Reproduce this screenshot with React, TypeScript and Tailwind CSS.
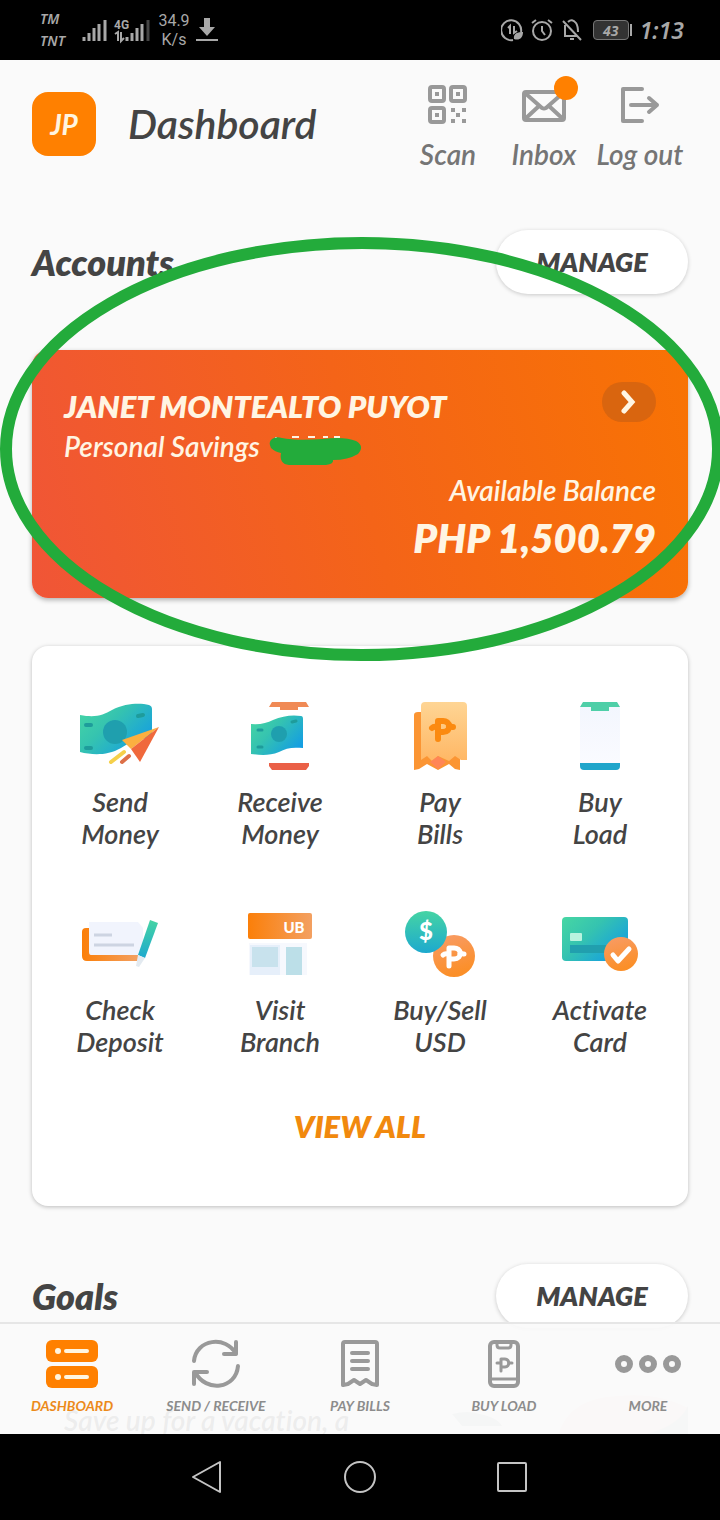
import type { ReactNode } from 'react';

const PesoMark = ({ x, y, width = 5 }: { x: number; y: number; width?: number }) => (
  <g transform={`translate(${x} ${y})`} fill="none" strokeWidth={width} strokeLinecap="round" strokeLinejoin="round">
    <path d="M-4 11V-7H0C9-8 10 4 1 4H-3" />
    <path d="M-10 0C-8-2-6-1-5-1M7-1C9-2 10-1 11-1" />
  </g>
);

const SendMoneyIcon = () => (
  <svg viewBox="0 0 100 100" className="size-[100px]" aria-hidden="true">
    <path d="M10 29C26 32 33 29 42 24C56 17 70 17 79 19Q82 20 82 23V53C68 51 60 57 51 62C37 70 22 69 10 66Z" fill="url(#bill)" />
    <circle cx="45" cy="46" r="12" fill="#1f9fae" />
    <path d="M16 39H21M16 62H21M68 30L73 29" stroke="#1e9c9b" strokeWidth="4" strokeLinecap="round" />
    <path d="M54 66L41 76" stroke="#f5d04a" strokeWidth="4" strokeLinecap="round" />
    <path d="M59 70L52 76" stroke="#dd7048" strokeWidth="4" strokeLinecap="round" />
    <path d="M89 41L52 54L61 63Z" fill="#fbb040" />
    <path d="M89 41L61 63L70 76Z" fill="#f0693c" />
  </svg>
);

const ReceiveMoneyIcon = () => (
  <svg viewBox="0 0 100 100" className="size-[100px]" aria-hidden="true">
    <path d="M42 16H76L79 21H68V24H50V21H39Z" fill="#f08a55" />
    <path d="M39 77H79V80L76 84H42L39 80Z" fill="#ea6047" />
    <path d="M21 38Q34 39 43 34Q57 28 71 30Q73 30 73 33V62C62 61 56 62 49 66C39 70 30 69 21 68Z" fill="url(#bill)" />
    <circle cx="49" cy="48" r="8" fill="#1f9fae" />
    <path d="M28 44H32M28 61H32M62 36L66 35" stroke="#1e9c9b" strokeWidth="3" strokeLinecap="round" />
  </svg>
);

const PayBillsIcon = () => (
  <svg viewBox="0 0 100 100" className="size-[100px]" aria-hidden="true">
    <path d="M24 29Q24 26 28 26H70V84L65 83L59 78L48 84L37 78L29 83L24 84Z" fill="#fb9533" />
    <path d="M31 20Q31 16 35 16H73Q77 16 77 20V74H71L65 70L59 75L48 70L42 75L37 70L31 74Z" fill="url(#receipt)" />
    <path d="M48 70L56 76L48 83L40 76Z" fill="#ff8656" />
    <g stroke="#fb8a10"><PesoMark x={52} y={42} width={6} /></g>
  </svg>
);

const BuyLoadIcon = () => (
  <svg viewBox="0 0 100 100" className="size-[100px]" aria-hidden="true">
    <rect x="30" y="20" width="40" height="58" fill="url(#screen)" />
    <path d="M33 16H67L70 21H59V25H41V21H30Z" fill="#4fcfa8" />
    <path d="M30 77H70V80Q70 84 66 84H34Q30 84 30 80Z" fill="#1fa5cb" />
  </svg>
);

const CheckDepositIcon = () => (
  <svg viewBox="0 0 100 100" className="size-[100px]" aria-hidden="true">
    <path d="M12 38Q12 34 16 34H22V60H68V67H17Q12 67 12 62Z" fill="url(#orange)" />
    <path d="M19 28H68L73 34V61H21Q19 61 19 58Z" fill="#f1f4fd" />
    <path d="M24 41H42M24 51H64" stroke="#cdd4e2" strokeWidth="3" />
    <path d="M80 26L88 29L75 64L68 61Z" fill="url(#teal)" />
    <path d="M68 61L75 64L69 73L66 72Z" fill="#e3eaf0" />
  </svg>
);

const VisitBranchIcon = () => (
  <svg viewBox="0 0 100 100" className="size-[100px]" aria-hidden="true">
    <rect x="18" y="19" width="64" height="26" rx="2" fill="url(#orange)" />
    <text x="64" y="39" textAnchor="middle" className="font-['Lato',sans-serif] text-[15px] font-black not-italic" fill="#fff">UB</text>
    <rect x="19" y="49" width="58" height="32" fill="#f6f8fd" />
    <rect x="20" y="51" width="30" height="30" fill="#e6effa" />
    <rect x="22" y="53" width="26" height="20" fill="#c8e2ed" />
    <rect x="56" y="53" width="16" height="28" fill="#bcdfe8" />
  </svg>
);

const BuySellIcon = () => (
  <svg viewBox="0 0 100 100" className="size-[100px]" aria-hidden="true">
    <circle cx="64" cy="62" r="21" fill="url(#coin)" />
    <circle cx="36" cy="38" r="21" fill="url(#teal)" />
    <text x="36" y="46" textAnchor="middle" className="font-['Lato',sans-serif] text-[24px] font-black not-italic" fill="#fff">$</text>
    <g stroke="#fff"><PesoMark x={63} y={61} /></g>
  </svg>
);

const ActivateCardIcon = () => (
  <svg viewBox="0 0 100 100" className="size-[100px]" aria-hidden="true">
    <rect x="12" y="23" width="66" height="44" rx="4" fill="url(#bill)" />
    <rect x="20" y="39" width="12" height="8" rx="1" fill="#b9f3df" />
    <rect x="20" y="51" width="44" height="8" fill="#219fae" />
    <circle cx="71" cy="60" r="17" fill="url(#coin)" />
    <path d="M63 61L68 67L79 55" fill="none" stroke="#fff" strokeWidth="5" strokeLinecap="round" strokeLinejoin="round" />
  </svg>
);

const actions = [
  { icon: <SendMoneyIcon />, lines: ['Send', 'Money'] },
  { icon: <ReceiveMoneyIcon />, lines: ['Receive', 'Money'] },
  { icon: <PayBillsIcon />, lines: ['Pay', 'Bills'] },
  { icon: <BuyLoadIcon />, lines: ['Buy', 'Load'] },
  { icon: <CheckDepositIcon />, lines: ['Check', 'Deposit'] },
  { icon: <VisitBranchIcon />, lines: ['Visit', 'Branch'] },
  { icon: <BuySellIcon />, lines: ['Buy/Sell', 'USD'] },
  { icon: <ActivateCardIcon />, lines: ['Activate', 'Card'] },
];

const tabs = [
  {
    label: 'DASHBOARD',
    active: true,
    icon: (
      <>
        <rect x="2" y="4" width="52" height="22" rx="6" fill="#ff8000" />
        <rect x="2" y="30" width="52" height="22" rx="6" fill="#ff8000" />
        <path d="M22 15H43M22 41H43" stroke="#fff5e0" strokeWidth="4" strokeLinecap="round" />
        <circle cx="14" cy="15" r="3" fill="#fff5e0" />
        <circle cx="14" cy="41" r="3" fill="#fff5e0" />
      </>
    ),
  },
  {
    label: 'SEND / RECEIVE',
    icon: (
      <g fill="none" stroke="#999" strokeWidth="4" strokeLinecap="round" strokeLinejoin="round">
        <path d="M6 25C8 3 38-1 48 18M48 6V18H36" />
        <path d="M50 30C48 53 18 57 7 36M6 48V36H19" />
      </g>
    ),
  },
  {
    label: 'PAY BILLS',
    icon: (
      <g fill="none" stroke="#999" strokeWidth="4" strokeLinecap="round" strokeLinejoin="round">
        <path d="M11 8Q11 6 13 6H43Q45 6 45 8V49L40 48L34 44L28 48L22 44L16 48L11 49Z" />
        <path d="M20 17H36M20 25H36M20 33H36" />
      </g>
    ),
  },
  {
    label: 'BUY LOAD',
    icon: (
      <g fill="none" stroke="#999" strokeWidth="4" strokeLinecap="round" strokeLinejoin="round">
        <rect x="14" y="6" width="28" height="44" rx="4" />
        <path d="M21 7V9Q21 12 24 12H32Q35 12 35 9V7M15 43H41" strokeWidth="3" />
        <path d="M25 35V23H29C34 23 34 31 29 31H25M21 27H24M33 27H36" strokeWidth="3" />
      </g>
    ),
  },
  {
    label: 'MORE',
    wide: true,
    icon: (
      <g fill="none" stroke="#999" strokeWidth="6">
        <circle cx="10" cy="28" r="6" />
        <circle cx="34" cy="28" r="6" />
        <circle cx="58" cy="28" r="6" />
      </g>
    ),
  },
];

const Gradients = () => (
  <svg className="absolute size-0" aria-hidden="true">
    <defs>
      <linearGradient id="bill" x1="0" y1="0" x2="1" y2="0.7">
        <stop offset="0" stopColor="#47d7a3" />
        <stop offset="0.45" stopColor="#35c3b0" />
        <stop offset="1" stopColor="#149ee2" />
      </linearGradient>
      <linearGradient id="teal" x1="0" y1="0" x2="0" y2="1">
        <stop offset="0" stopColor="#45d4a4" />
        <stop offset="1" stopColor="#1da9ce" />
      </linearGradient>
      <linearGradient id="coin" x1="0" y1="0" x2="0.3" y2="1">
        <stop offset="0" stopColor="#f89c68" />
        <stop offset="1" stopColor="#fb8f28" />
      </linearGradient>
      <linearGradient id="orange" x1="0" y1="0" x2="1" y2="0">
        <stop offset="0" stopColor="#fb7f09" />
        <stop offset="1" stopColor="#f3a061" />
      </linearGradient>
      <linearGradient id="receipt" x1="0" y1="0" x2="0" y2="1">
        <stop offset="0" stopColor="#fed594" />
        <stop offset="1" stopColor="#ffb765" />
      </linearGradient>
      <linearGradient id="screen" x1="0" y1="0" x2="0" y2="1">
        <stop offset="0" stopColor="#f3f6fe" />
        <stop offset="1" stopColor="#fafbff" />
      </linearGradient>
    </defs>
  </svg>
);

const StatusBar = () => (
  <div className="flex h-[60px] shrink-0 items-center justify-between bg-black pr-9 pl-10 text-[#a8a8a8]">
    <div className="flex items-center">
      <div className="w-10 font-['Noto_Sans',sans-serif] text-[14px] leading-[22px] font-semibold italic">
        <div>TM</div>
        <div>TNT</div>
      </div>
      <svg width="68" height="40" viewBox="0 0 68 40" aria-hidden="true" className="mx-1 overflow-visible">
        <path d="M0 31V27M5 31V23M10 31V18M15 31V14M21 31V10M43 31V27M48 31V23M53 31V18M58 31V14" stroke="#a8a8a8" strokeWidth="3" />
        <path d="M64 31V10" stroke="#444" strokeWidth="3" />
        <path d="M31 24L34 22V31M37 22V31L40 28" fill="none" stroke="#a8a8a8" strokeWidth="2" />
        <text x="30" y="19" fill="#a8a8a8" className="font-['Roboto',sans-serif] text-[12px] font-bold not-italic">4G</text>
      </svg>
      <div className="w-9 text-center font-['Roboto',sans-serif] text-[16px] leading-[19px] not-italic">
        <div>34.9</div>
        <div>K/s</div>
      </div>
      <svg width="22" height="24" viewBox="0 0 22 24" aria-hidden="true" className="ml-1">
        <path d="M8 0H14V9H19L11 18L3 9H8Z" fill="#a8a8a8" />
        <path d="M0 22H22" stroke="#a8a8a8" strokeWidth="2" />
      </svg>
    </div>
    <div className="flex items-center gap-2">
      <svg width="84" height="24" viewBox="0 0 84 24" fill="none" stroke="#a8a8a8" strokeWidth="2" aria-hidden="true">
        <path d="M20 14A10 10 0 1 0 12 22M7 10L9 8V16M13 8V15L16 13" />
        <path d="M13 21C12 15 17 14 22 14C22 20 18 23 13 21Z" fill="#a8a8a8" stroke="none" />
        <circle cx="41" cy="13" r="9" />
        <path d="M41 8V13L44 17M31 5L35 2M47 2L51 5" />
        <path d="M62 3L80 22M64 7V18H76M67 4Q71 0 75 5Q77 8 77 14M69 21H73" />
      </svg>
      <div className="flex h-[22px] items-center gap-px">
        <div className="flex h-5 w-9 items-center justify-center rounded-sm border border-[#777] bg-[#333] font-['Noto_Sans',sans-serif] text-[14px] font-bold italic">43</div>
        <div className="h-3 w-0.5 bg-[#a8a8a8]" />
      </div>
      <div className="font-['Noto_Sans',sans-serif] text-[23px] font-semibold italic">1:13</div>
    </div>
  </div>
);

const HeaderAction = ({ label, children }: { label: string; children: ReactNode }) => (
  <button className="flex w-24 flex-col items-center gap-2.5 text-[28px] leading-8 font-semibold whitespace-nowrap text-[#757575] italic">
    {children}
    <span>{label}</span>
  </button>
);

const SectionHeading = ({ title }: { title: string }) => (
  <div className="flex items-center justify-between">
    <h2 className="text-[36px] leading-10 font-extrabold text-[#444]">{title}</h2>
    <button className="h-16 w-48 rounded-full bg-white text-[27px] font-extrabold text-[#444] italic shadow-[0_1px_4px_rgba(0,0,0,0.2)]">
      MANAGE
    </button>
  </div>
);

export default function App() {
  return (
    <div className="flex h-screen flex-col overflow-hidden bg-[#fafafa] font-['Lato',sans-serif] text-[#444] italic [font-variant-ligatures:none]">
      <Gradients />
      <StatusBar />

      <div className="relative min-h-0 flex-1">
        <main className="h-full overflow-y-auto px-8 [scrollbar-width:none]">
          <header className="flex h-[170px] items-start justify-between pt-5">
            <div className="mt-3 flex items-center gap-8">
              <div className="flex size-16 items-center justify-center rounded-2xl bg-[#ff8000] text-[28px] font-bold text-[#fff5e0]">JP</div>
              <h1 className="text-[41px] leading-[48px] font-semibold">Dashboard</h1>
            </div>
            <div className="flex">
              <HeaderAction label="Scan">
                <svg width="48" height="48" viewBox="0 0 48 48" fill="none" stroke="#999" strokeWidth="4" aria-hidden="true">
                  <rect x="6" y="7" width="14" height="14" rx="2" />
                  <rect x="27" y="7" width="14" height="14" rx="2" />
                  <rect x="6" y="28" width="14" height="14" rx="2" />
                  <path d="M11 14H15M32 14H36M11 35H15M27 30H31M38 30H42M32 35H36M27 41H31M38 41H42" />
                </svg>
              </HeaderAction>
              <HeaderAction label="Inbox">
                <span className="relative">
                  <svg width="48" height="48" viewBox="0 0 48 48" fill="none" stroke="#999" strokeWidth="4" strokeLinejoin="round" aria-hidden="true">
                    <rect x="4" y="12" width="40" height="28" rx="2" />
                    <path d="M5 13L22 28Q24 29 26 28L43 13M5 39L19 26M43 39L29 26" />
                  </svg>
                  <span className="absolute -top-1 -right-2.5 size-6 rounded-full bg-[#ff8000]" />
                </span>
              </HeaderAction>
              <HeaderAction label="Log out">
                <svg width="48" height="48" viewBox="0 0 48 48" fill="none" stroke="#999" strokeWidth="4" strokeLinecap="round" strokeLinejoin="round" aria-hidden="true">
                  <path d="M26 9H7V41H26M15 25H41M33 18L41 25L33 32" />
                </svg>
              </HeaderAction>
            </div>
          </header>

          <section className="relative">
            <SectionHeading title="Accounts" />
            <article className="mt-14 rounded-2xl bg-linear-[75deg,#f05537,#f46418_50%,#f87304] px-8 pt-8 pb-9 text-[#fff5e3] shadow-[0_2px_5px_rgba(0,0,0,0.3)]">
              <div className="flex h-12 items-start justify-between">
                <h3 className="text-[31px] leading-[48px] font-extrabold">JANET MONTEALTO PUYOT</h3>
                <button aria-label="Open account" className="flex h-10 w-[54px] items-center justify-center rounded-full bg-[#d9650f]">
                  <svg width="16" height="24" viewBox="0 0 16 24" fill="none" stroke="#fff5e3" strokeWidth="5" aria-hidden="true">
                    <path d="M3 3L11 12L3 21" strokeLinecap="round" />
                  </svg>
                </button>
              </div>
              <div className="flex items-center gap-2 text-[28px] leading-8 font-semibold">
                <span>Personal Savings</span>
                <svg width="94" height="32" viewBox="0 0 94 32" aria-hidden="true" className="overflow-visible">
                  <path d="M8 7V9M24 7H31M40 7H47M55 7H60M66 7H72" stroke="#fff5e3" strokeWidth="2" />
                  <path d="M4 9Q0 12 3 18Q7 22 13 23Q11 34 21 35H58Q66 34 65 30Q80 30 90 24Q97 16 88 11Q76 6 55 9Q28 11 14 8Q8 6 4 9Z" fill="#23ab3b" />
                </svg>
              </div>
              <div className="mt-3 text-right">
                <div className="text-[28px] leading-8 font-semibold">Available Balance</div>
                <div className="mt-2 text-[40px] leading-[48px] font-extrabold">PHP 1,500.79</div>
              </div>
            </article>
            {/* hand-drawn highlight circle around the account */}
            <svg viewBox="0 0 720 424" preserveAspectRatio="none" fill="none" aria-hidden="true" className="pointer-events-none absolute top-[7px] -left-8 h-[424px] w-[calc(100%+64px)]">
              <ellipse cx="362" cy="212" rx="356" ry="206" stroke="#23ab3b" strokeWidth="12" />
            </svg>
          </section>

          <section className="mt-12 rounded-2xl bg-white px-2 pt-10 pb-14 shadow-[0_1px_4px_rgba(0,0,0,0.25)]">
            <div className="grid grid-cols-4 gap-y-11">
              {actions.map((action) => (
                <button key={action.lines.join(' ')} className="flex flex-col items-center text-[27px] leading-8 font-semibold italic">
                  {action.icon}
                  {action.lines.map((line) => (
                    <span key={line}>{line}</span>
                  ))}
                </button>
              ))}
            </div>
            <button className="mx-auto mt-11 block h-12 text-[31px] font-extrabold text-[#f1890e] italic">VIEW ALL</button>
          </section>

          <section className="mt-[58px]">
            <SectionHeading title="Goals" />
            <div className="mt-14 flex justify-between overflow-hidden rounded-t-2xl bg-white pl-8">
              <p className="pt-5 text-[28px] leading-8 font-semibold whitespace-nowrap">Save up for a vacation, a</p>
              <svg width="240" height="52" viewBox="0 0 240 52" aria-hidden="true">
                <path d="M4 30Q20 26 32 30Q50 34 54 42H14Z" fill="#b9c6c4" />
                <path d="M110 52Q120 14 170 12Q210 8 240 24V52Z" fill="#fbdcd8" />
                <path d="M190 52Q230 44 240 22V52Z" fill="#c9cccc" />
              </svg>
            </div>
          </section>
        </main>

        <nav className="absolute inset-x-0 bottom-0 grid h-28 grid-cols-5 border-t-2 border-[#e6e6e6] bg-[#fafafa]/93">
          {tabs.map((tab) => (
            <button
              key={tab.label}
              className={`flex flex-col items-center pt-3 text-[14px] leading-5 font-bold italic ${tab.active ? 'text-[#ec8a1a]' : 'text-[#8c8c8c]'}`}
            >
              <svg width={tab.wide ? 68 : 56} height="56" viewBox={tab.wide ? '0 0 68 56' : '0 0 56 56'} aria-hidden="true">
                {tab.icon}
              </svg>
              <span className="mt-1">{tab.label}</span>
            </button>
          ))}
        </nav>
      </div>

      <div className="flex h-[86px] shrink-0 items-center justify-center gap-[120px] bg-black">
        <button aria-label="Back">
          <svg width="32" height="34" viewBox="0 0 32 34" fill="none" stroke="#c4c4c4" strokeWidth="2" strokeLinejoin="round">
            <path d="M28 2V32L1 17Z" />
          </svg>
        </button>
        <button aria-label="Home">
          <svg width="32" height="34" viewBox="0 0 32 34" fill="none" stroke="#c4c4c4" strokeWidth="2">
            <circle cx="16" cy="17" r="15" />
          </svg>
        </button>
        <button aria-label="Recent apps">
          <svg width="32" height="34" viewBox="0 0 32 34" fill="none" stroke="#c4c4c4" strokeWidth="2">
            <rect x="2" y="3" width="28" height="28" rx="1" />
          </svg>
        </button>
      </div>
    </div>
  );
}
